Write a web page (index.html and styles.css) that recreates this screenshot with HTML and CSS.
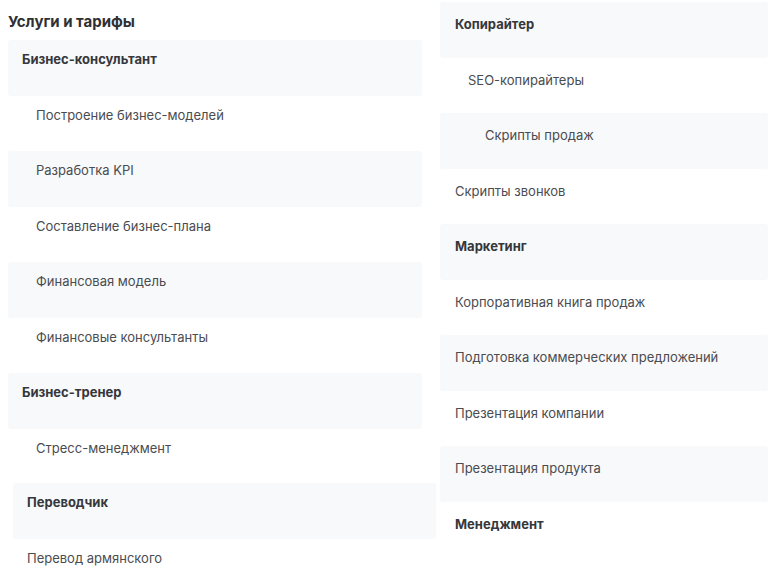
FILE: index.html
```html
<!DOCTYPE html>
<html lang="ru">
<head>
<meta charset="utf-8">
<title>Услуги и тарифы</title>
<link rel="stylesheet" href="styles.css">
</head>
<body>
<div class="page">
  <section class="col col-left">
    <h2 class="title">Услуги и тарифы</h2>
    <div class="row shade head">Бизнес-консультант</div>
    <div class="row item">Построение бизнес-моделей</div>
    <div class="row shade item">Разработка KPI</div>
    <div class="row item">Составление бизнес-плана</div>
    <div class="row shade item">Финансовая модель</div>
    <div class="row item">Финансовые консультанты</div>
    <div class="row shade head">Бизнес-тренер</div>
    <div class="row item">Стресс-менеджмент</div>
    <div class="group-shift">
      <div class="row shade head">Переводчик</div>
      <div class="row plain">Перевод армянского</div>
    </div>
  </section>
  <section class="col col-right">
    <div class="row shade head">Копирайтер</div>
    <div class="row item">SEO-копирайтеры</div>
    <div class="row shade item deep">Скрипты продаж</div>
    <div class="row plain">Скрипты звонков</div>
    <div class="row shade head">Маркетинг</div>
    <div class="row plain">Корпоративная книга продаж</div>
    <div class="row shade plain">Подготовка коммерческих предложений</div>
    <div class="row plain">Презентация компании</div>
    <div class="row shade plain">Презентация продукта</div>
    <div class="row head">Менеджмент</div>
  </section>
</div>
</body>
</html>
```

FILE: styles.css
```css
html, body {
  margin: 0;
  padding: 0;
  background: #ffffff;
}

body {
  font-family: Inter, "Noto Sans", "Liberation Sans", sans-serif;
  color: #4a4c50;
  font-size: 13px;
  overflow: hidden;
  height: 580px;
}

.page {
  display: flex;
  gap: 18px;
  padding-left: 8px;
}

.col {
  display: flex;
  flex-direction: column;
}

.col-left {
  width: 414px;
  flex: none;
  padding-top: 8px;
}

.col-right {
  flex: 1;
  padding-top: 2px;
}

.title {
  margin: 0;
  font-size: 15px;
  font-weight: 700;
  line-height: 20px;
  padding: 4px 0 8px;
  color: #2f3033;
}

.row {
  box-sizing: border-box;
  height: 55.5px;
  line-height: 18px;
  padding-top: 10px;
  white-space: nowrap;
}

.col-right .row {
  padding-top: 13px;
}

.shade {
  background: #f8f9fa;
  border-radius: 3px;
}

.head {
  font-weight: 700;
  color: #36373a;
  padding-left: 14px;
}

.col-right .head,
.col-right .plain {
  padding-left: 15px;
}

.item {
  padding-left: 28px;
}

.item.deep {
  padding-left: 45px;
}

.plain {
  padding-left: 14px;
}

.group-shift {
  margin-top: -1px;
  margin-left: 5px;
  margin-right: -14px;
}
```
